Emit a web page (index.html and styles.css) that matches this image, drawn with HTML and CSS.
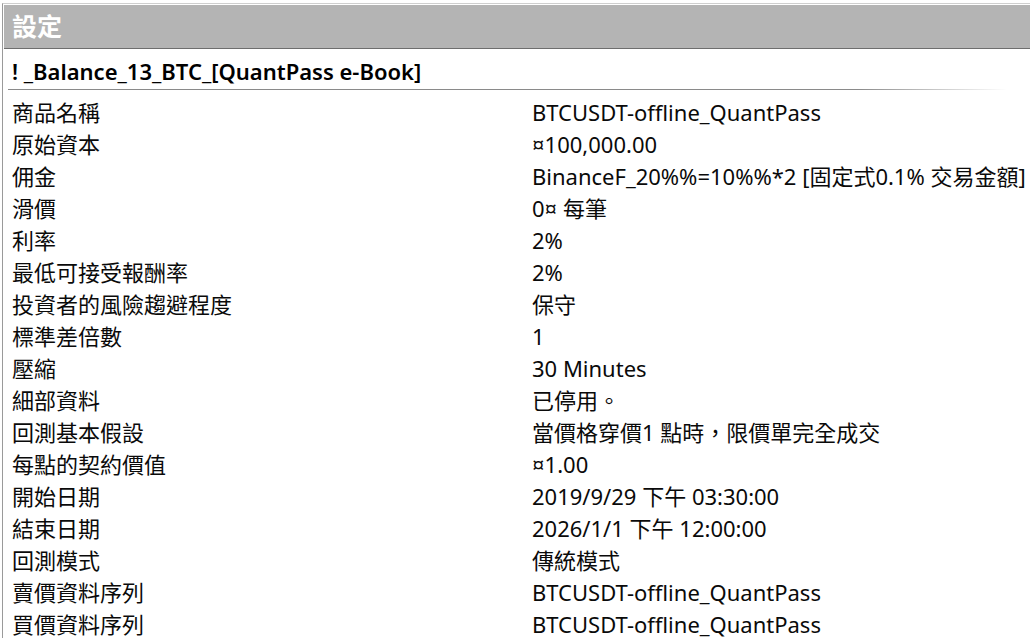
FILE: index.html
```html
<!DOCTYPE html>
<html lang="zh-Hant">
<head>
<meta charset="utf-8">
<title>設定</title>
<link rel="stylesheet" href="styles.css">
</head>
<body>
<div class="panel">
  <div class="header">設定</div>
  <div class="title">! _Balance_13_BTC_[QuantPass e-Book]</div>
  <div class="rows">
    <div class="row"><span class="k">商品名稱</span><span class="v">BTCUSDT-offline_QuantPass</span></div>
    <div class="row"><span class="k">原始資本</span><span class="v">¤100,000.00</span></div>
    <div class="row"><span class="k">佣金</span><span class="v">BinanceF_20%%=10%%*2 [固定式0.1% 交易金額]</span></div>
    <div class="row"><span class="k">滑價</span><span class="v">0¤ 每筆</span></div>
    <div class="row"><span class="k">利率</span><span class="v">2%</span></div>
    <div class="row"><span class="k">最低可接受報酬率</span><span class="v">2%</span></div>
    <div class="row"><span class="k">投資者的風險趨避程度</span><span class="v">保守</span></div>
    <div class="row"><span class="k">標準差倍數</span><span class="v">1</span></div>
    <div class="row"><span class="k">壓縮</span><span class="v">30 Minutes</span></div>
    <div class="row"><span class="k">細部資料</span><span class="v">已停用。</span></div>
    <div class="row"><span class="k">回測基本假設</span><span class="v">當價格穿價1 點時，限價單完全成交</span></div>
    <div class="row"><span class="k">每點的契約價值</span><span class="v">¤1.00</span></div>
    <div class="row"><span class="k">開始日期</span><span class="v">2019/9/29 下午 03:30:00</span></div>
    <div class="row"><span class="k">結束日期</span><span class="v">2026/1/1 下午 12:00:00</span></div>
    <div class="row"><span class="k">回測模式</span><span class="v">傳統模式</span></div>
    <div class="row"><span class="k">賣價資料序列</span><span class="v">BTCUSDT-offline_QuantPass</span></div>
    <div class="row"><span class="k">買價資料序列</span><span class="v">BTCUSDT-offline_QuantPass</span></div>
  </div>
</div>
</body>
</html>
```
FILE: styles.css
```css
html, body {
  margin: 0;
  padding: 0;
  background: #ffffff;
  overflow: hidden;
}
body {
  font-family: "Noto Sans", "Noto Sans CJK TC", sans-serif;
  color: #0a0a0a;
  width: 1030px;
  height: 638px;
}
.panel {
  margin: 3px 0 0 2px;
  border-top: 1px solid #cfcfcf;
  border-left: 1px solid #9a9a9a;
  padding-left: 1px;
  height: 640px;
}
.header {
  margin-top: 1px;
  height: 43px;
  background: #b4b4b4;
  border-bottom: 1px solid #6e6e6e;
  color: #ffffff;
  font-weight: bold;
  font-size: 25px;
  line-height: 43px;
  padding-left: 8px;
}
.title {
  height: 40px;
  line-height: 44px;
  font-size: 22px;
  font-weight: 600;
  margin-left: 4px;
  padding-left: 4px;
  border-bottom: 1px solid transparent;
  border-image: linear-gradient(to right, #8a8a8a 0%, #8a8a8a 85%, rgba(138,138,138,0) 100%) 1;
  margin-right: 24px;
  color: #000;
  white-space: nowrap;
}
.rows {
  padding-top: 6px;
}
.row {
  display: flex;
  height: 32px;
  line-height: 32px;
  font-size: 22px;
  white-space: nowrap;
}
.k {
  width: 520px;
  flex: none;
  padding-left: 8px;
}
.v {
  flex: none;
}
```
